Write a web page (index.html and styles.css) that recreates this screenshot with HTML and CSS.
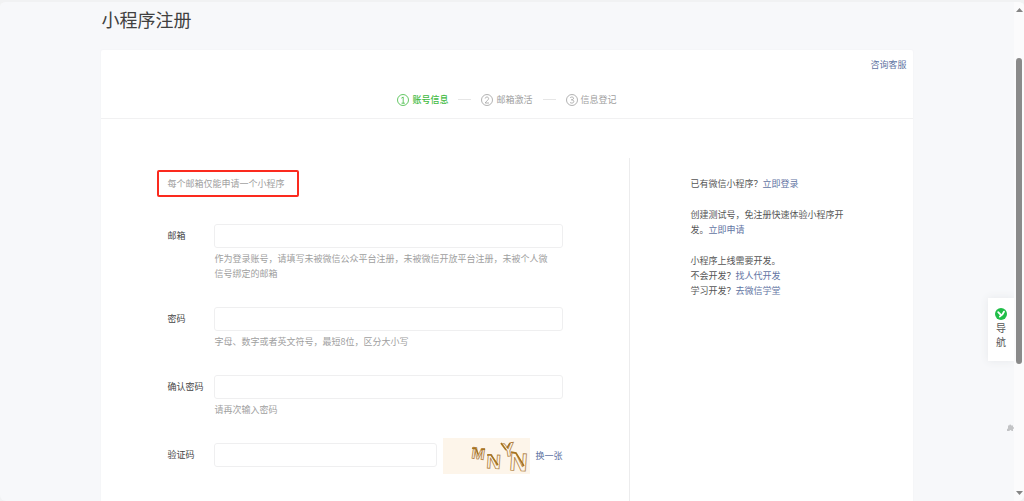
FILE: index.html
```html
<!DOCTYPE html>
<html lang="zh-CN">
<head>
<meta charset="utf-8">
<title>小程序注册</title>
<link rel="stylesheet" href="styles.css">
</head>
<body>
<div class="window">
  <main class="page">
    <h1 class="title">小程序注册</h1>
    <section class="card">
      <header class="card-head">
        <a class="link service" href="#">咨询客服</a>
        <ol class="steps">
          <li class="step step-active"><svg class="step-num" viewBox="0 0 12 12"><circle cx="6" cy="6" r="5.5"/><path d="M4.3 4.2 6.2 3V9.3M4.5 9.2h3.4"/></svg>账号信息</li>
          <li class="step"><svg class="step-num" viewBox="0 0 12 12"><circle cx="6" cy="6" r="5.5"/><path d="M4.2 4.5C4.3 2.5 7.7 2.5 7.6 4.6 7.5 6 5 7.5 4.2 9H8"/></svg>邮箱激活</li>
          <li class="step"><svg class="step-num" viewBox="0 0 12 12"><circle cx="6" cy="6" r="5.5"/><path d="M4.2 3.6C5.5 2.6 7.6 2.9 7.5 4.4 7.4 5.5 6.5 5.8 5.3 5.8 6.8 5.8 7.8 6.3 7.8 7.5 7.7 9.2 5.6 9.4 4.1 8.6"/></svg>信息登记</li>
        </ol>
      </header>
      <div class="card-body">
        <form class="form">
          <p class="notice">每个邮箱仅能申请一个小程序</p>
          <div class="field">
            <label class="label" for="email">邮箱</label>
            <div class="control">
              <input class="input" id="email" type="email">
              <p class="hint">作为登录账号，请填写未被微信公众平台注册，未被微信开放平台注册，未被个人微<br>信号绑定的邮箱</p>
            </div>
          </div>
          <div class="field">
            <label class="label" for="pwd">密码</label>
            <div class="control">
              <input class="input" id="pwd" type="password">
              <p class="hint">字母、数字或者英文符号，最短8位，区分大小写</p>
            </div>
          </div>
          <div class="field">
            <label class="label" for="pwd2">确认密码</label>
            <div class="control">
              <input class="input" id="pwd2" type="password">
              <p class="hint">请再次输入密码</p>
            </div>
          </div>
          <div class="field">
            <label class="label" for="code">验证码</label>
            <div class="control captcha-row">
              <input class="input" id="code" type="text">
              <svg class="captcha" viewBox="0 0 87 36" role="img" aria-label="验证码图片">
                <rect width="87" height="36" fill="#fdf5ea"/>
                <g class="captcha-text">
                  <text x="28" y="20" font-size="16" transform="rotate(8 28 20)">M</text>
                  <text x="43" y="30" font-size="20" transform="rotate(4 43 30)">N</text>
                  <text x="60" y="19" font-size="19" transform="rotate(-8 60 19)">Y</text>
                  <text x="66" y="32" font-size="25" transform="rotate(4 66 32)">N</text>
                </g>
                <path d="M29 10l4 1 2 5M38 12l4-1M44 17l4 0 7 10M58 5l5 7M67 5l-3 5M68 14l5 1 8 13" fill="none" stroke="#a8741f" stroke-width="1.5"/>
              </svg>
              <a class="link" href="#">换一张</a>
            </div>
          </div>
        </form>
        <aside class="aside">
          <p>已有微信小程序？<a class="link" href="#">立即登录</a></p>
          <p>创建测试号，免注册快速体验小程序开<br>发。<a class="link" href="#">立即申请</a></p>
          <p>小程序上线需要开发。<br>不会开发？<a class="link" href="#">找人代开发</a><br>学习开发？<a class="link" href="#">去微信学堂</a></p>
        </aside>
      </div>
    </section>
    <button class="guide" type="button">
      <svg class="guide-icon" viewBox="0 0 12 12"><circle cx="6" cy="6" r="6" fill="#20be48"/><path d="M3.2 4.1 5.6 6.6M9 3.6C8 6.2 6.8 7.6 4.9 8.5" fill="none" stroke="#fff" stroke-width="1.8" stroke-linecap="round"/></svg>
      <span>导</span><span>航</span>
    </button>
    <svg class="plugin" viewBox="0 0 7 7"><path d="M1 1.5h1.2a1 1 0 0 1 2 0H6V3a1 1 0 0 1 0 2v2H4.5a1 1 0 0 0-2 0H0V5a1 1 0 0 0 1-1z" fill="#c3c4c6"/></svg>
  </main>
  <div class="scrollbar">
    <svg class="arrow" viewBox="0 0 7 4"><path d="M0 4 3.5 0 7 4z" fill="#858585"/></svg>
    <div class="track"><div class="thumb"></div></div>
    <svg class="arrow" viewBox="0 0 7 4"><path d="M0 0 3.5 4 7 0z" fill="#858585"/></svg>
  </div>
</div>
</body>
</html>
```
FILE: styles.css
```css
* { box-sizing: border-box; }

body {
  margin: 0;
  background: #f1f2f3;
  color: #555;
  font: 9px/15px "Noto Sans CJK SC", sans-serif;
}

h1, p, ol { margin: 0; padding: 0; }

.window {
  display: grid;
  grid-template-columns: 1fr 10px;
  height: 100vh;
  overflow: hidden;
  background: #f7f8fa;
  border-top: 2px solid #f1f2f3;
  border-radius: 6px;
}

.page {
  position: relative;
  min-width: 0;
  overflow: hidden;
}

.title {
  width: 80%;
  margin: 0 auto;
  padding: 4px 0 18px;
  font-size: 18px;
  font-weight: 400;
  line-height: 26px;
  color: #404040;
}

.card {
  width: 80%;
  min-height: 100%;
  margin: 0 auto;
  background: #fff;
  border-radius: 2px;
  box-shadow: 0 0 2px #eeeff1;
}

.card-head {
  display: flex;
  flex-direction: column;
  height: 69px;
  padding: 7px 6px 0;
  border-bottom: 1px solid #f1f1f2;
}

.link { color: #6274a3; text-decoration: none; }
.service { align-self: flex-end; }

.steps {
  display: flex;
  justify-content: center;
  margin-top: 20px;
  list-style: none;
  color: #a0a0a0;
}

.step { display: flex; align-items: center; }

.step + .step::before {
  content: "";
  width: 13px;
  height: 1px;
  margin: 0 10px;
  background: #e6e6e6;
}

.step-num {
  width: 12px;
  height: 12px;
  margin-right: 3px;
  fill: none;
  stroke: currentColor;
  stroke-width: 0.8;
}

.step-active { color: #3fba3f; font-weight: 500; }

.card-body {
  display: grid;
  grid-template-columns: 527fr 284fr;
  padding-top: 39px;
}

.form { padding: 12px 66px 40px; }

.notice {
  width: max-content;
  min-width: 142px;
  margin: 0 0 27px -10px;
  padding: 4px 8px;
  border: 2px solid #fb2a1e;
  border-radius: 2px;
  line-height: 15px;
  color: #a0a0a0;
}

.field {
  display: grid;
  grid-template-columns: 47px 1fr;
  margin-bottom: 26px;
}

.label { line-height: 24px; color: #454545; }

.input {
  display: block;
  width: 100%;
  height: 24px;
  padding: 0 6px;
  background: #fff;
  border: 1px solid #efeff0;
  border-radius: 3px;
  font: inherit;
}

.hint { margin-top: 3px; color: #a0a0a0; white-space: nowrap; }

.captcha-row {
  display: grid;
  grid-template-columns: 1fr 87px auto;
  align-items: center;
  column-gap: 6px;
}

.captcha { width: 87px; height: 36px; margin: -5px 0 -7px; }

.captcha-text {
  fill: #fdf5ea;
  stroke: #b08142;
  stroke-width: 0.8;
  font-family: "Liberation Sans Narrow", "Liberation Sans", sans-serif;
  font-weight: 700;
}

.aside {
  display: flex;
  flex-direction: column;
  gap: 16px;
  padding: 18px 20px 40px 61px;
  border-left: 1px solid #ececed;
  min-height: 400px;
}

.guide {
  position: absolute;
  top: 296px;
  right: 0;
  display: flex;
  flex-direction: column;
  align-items: center;
  padding: 10px 7px 12px;
  background: #fff;
  border: 0;
  box-shadow: 0 0 8px #e6e8eb;
  color: #555;
  font: 10px/14px "Noto Sans CJK SC", sans-serif;
}

.guide-icon { width: 12px; height: 12px; margin-bottom: 1px; }

.plugin {
  position: absolute;
  right: 0;
  bottom: 70px;
  width: 7px;
  height: 7px;
}

.scrollbar {
  display: flex;
  flex-direction: column;
  align-items: center;
  padding: 6px 0;
  background: #fbfbfc;
}

.arrow { width: 7px; height: 4px; }

.track { flex: 1; width: 6px; padding-top: 46px; }

.thumb { height: 70%; min-height: 306px; background: #8a8a8a; border-radius: 3px; }
```
